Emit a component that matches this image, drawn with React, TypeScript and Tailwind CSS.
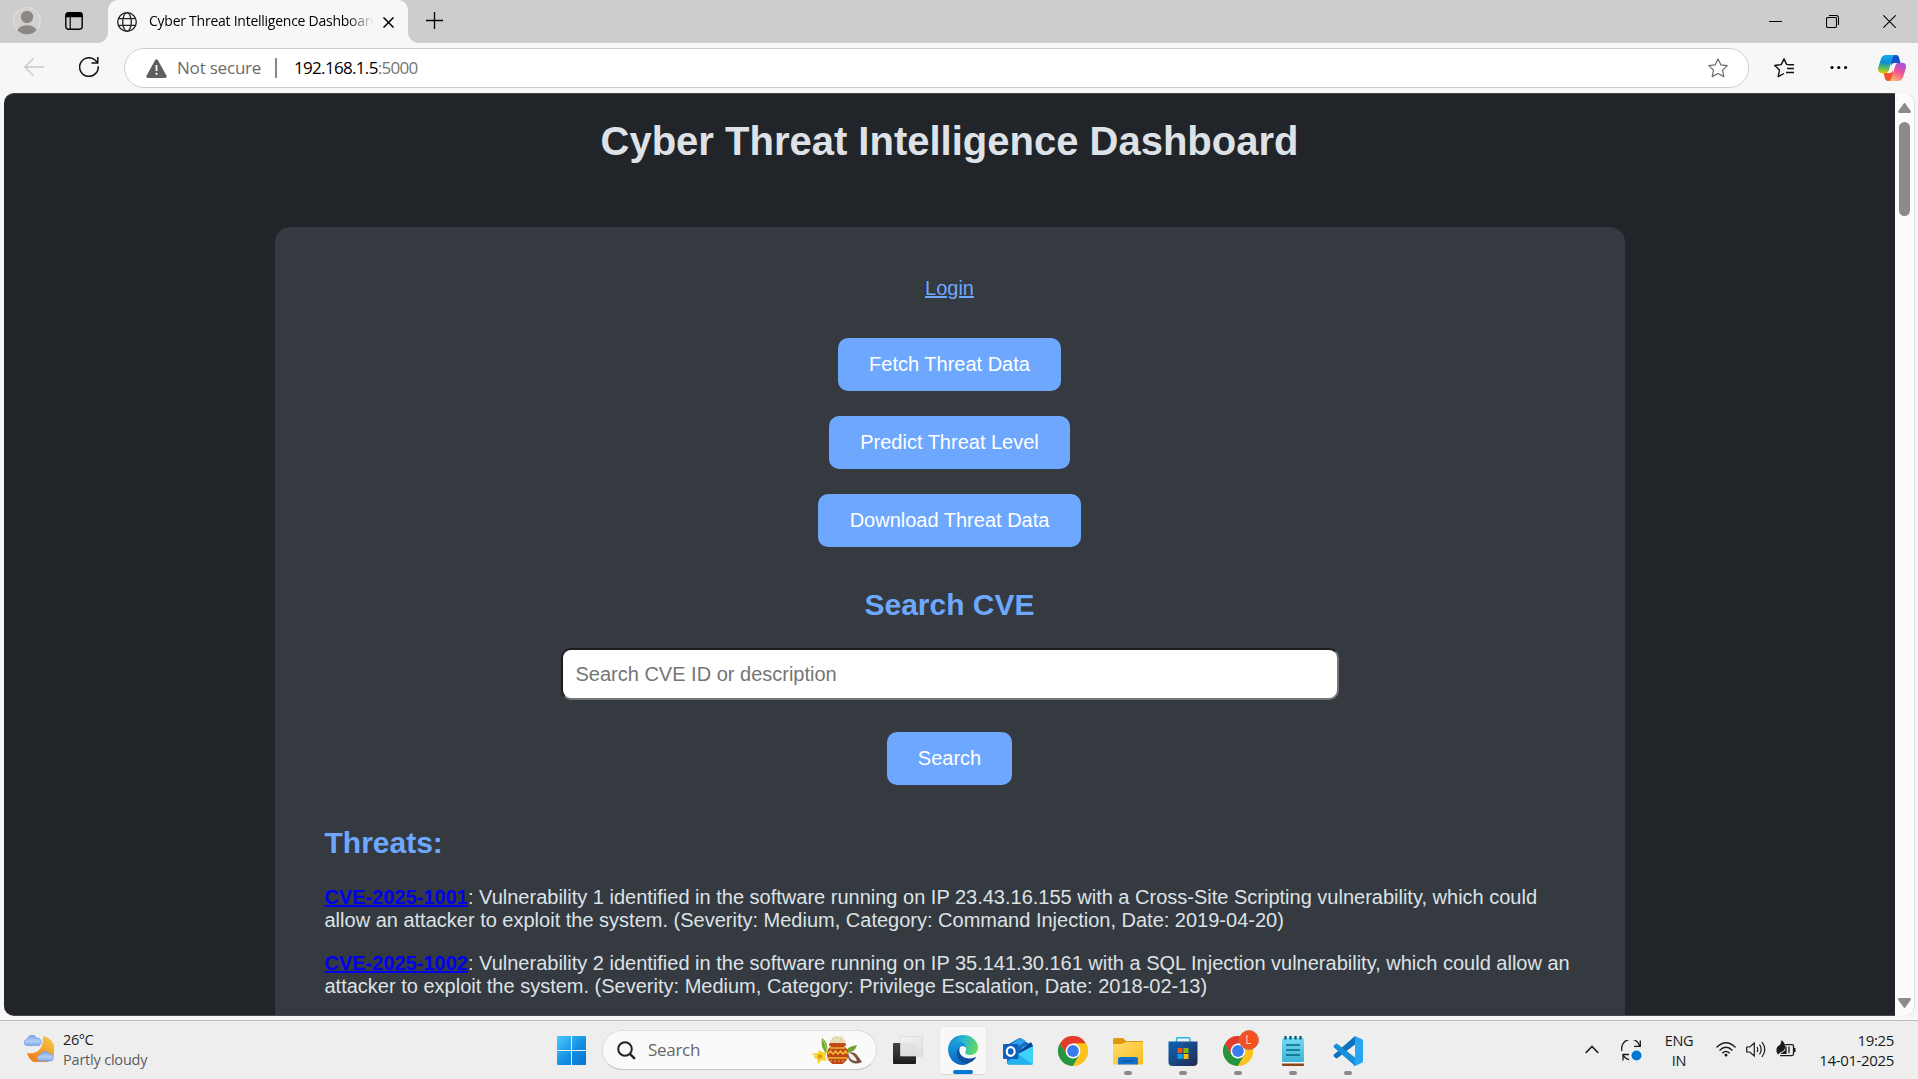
import type { ReactNode } from "react";

const threats = [
  {
    id: "CVE-2025-1001",
    text: "Vulnerability 1 identified in the software running on IP 23.43.16.155 with a Cross-Site Scripting vulnerability, which could allow an attacker to exploit the system. (Severity: Medium, Category: Command Injection, Date: 2019-04-20)",
  },
  {
    id: "CVE-2025-1002",
    text: "Vulnerability 2 identified in the software running on IP 35.141.30.161 with a SQL Injection vulnerability, which could allow an attacker to exploit the system. (Severity: Medium, Category: Privilege Escalation, Date: 2018-02-13)",
  },
];

function TabStrip() {
  return (
    <div className="flex h-[43px] shrink-0 bg-[#cdcdcd]">
      <svg className="mt-[7px] ml-[13px] size-7 shrink-0" viewBox="0 0 28 28">
        <circle cx="14" cy="14" r="13.5" fill="#d3d1cf" stroke="#e2e0de" />
        <circle cx="14" cy="10" r="6.2" fill="#8d8885" />
        <path d="M4.3 23.2a10.5 8 0 0 1 19.4 0A13 13 0 0 1 4.3 23.2z" fill="#8d8885" />
      </svg>
      <svg className="mt-3 ml-6 size-[18px] shrink-0" viewBox="0 0 18 18" fill="none">
        <rect x="0.8" y="0.8" width="16.4" height="16.4" rx="2.6" stroke="#000" strokeWidth="1.4" />
        <path d="M.6 5.2V3A2.4 2.4 0 0 1 3 .6h12A2.4 2.4 0 0 1 17.400 3v2.200z" fill="#000" />
        <path d="M5.200 5v12" stroke="#000" strokeWidth="1.200" />
      </svg>
      <div className="ml-[15px] flex w-[320px] shrink-0">
        <span className="h-full w-[10px] bg-[radial-gradient(circle_at_0_calc(100%_-_10px),#cdcdcd_9.500px,#f7f7f7_10px)] [clip-path:inset(33px_0_0_0)]" />
        <div className="flex h-full w-[300px] rounded-t-[10px] bg-[#f7f7f7]">
          <svg className="mt-3 ml-[9px] size-5 shrink-0" viewBox="0 0 20 20" fill="none" stroke="#222" strokeWidth="1.300">
            <circle cx="10" cy="10" r="9.300" />
            <ellipse cx="10" cy="10" rx="4.300" ry="9.300" />
            <path d="M1.500 6.700h17M1.500 13.300h17" />
          </svg>
          <div className="ml-3 h-[40px] w-[225px] overflow-hidden whitespace-nowrap bg-[linear-gradient(90deg,#000_88%,transparent_100%)] bg-clip-text font-['Open_Sans','Noto_Sans',sans-serif] text-[14px] leading-[42px] tracking-[-0.250px] text-transparent">
            Cyber Threat Intelligence Dashboard
          </div>
          <svg className="mt-[17px] ml-[9px] size-[11px] shrink-0" viewBox="0 0 11 11" stroke="#000" strokeWidth="1.500">
            <path d="M.5.5l10 10M10.500.5l-10 10" />
          </svg>
        </div>
        <span className="h-full w-[10px] bg-[radial-gradient(circle_at_100%_calc(100%_-_10px),#cdcdcd_9.500px,#f7f7f7_10px)] [clip-path:inset(33px_0_0_0)]" />
      </div>
      <svg className="mt-3 ml-2 size-[17px] shrink-0" viewBox="0 0 17 17" stroke="#000" strokeWidth="1.300">
        <path d="M8.500 0v17M0 8.500h17" />
      </svg>
      <div className="mt-[15px] mr-[22px] ml-auto flex gap-[44px]">
        <svg className="size-[13px]" viewBox="0 0 13 13" stroke="#000">
          <path d="M0 6.500h13" />
        </svg>
        <svg className="size-[13px]" viewBox="0 0 13 13" fill="none" stroke="#000" strokeWidth="1.100">
          <rect x=".5" y="2.500" width="10" height="10" rx="1.500" />
          <path d="M3 .5h7A2.500 2.500 0 0 1 12.500 3v7" />
        </svg>
        <svg className="size-[13px]" viewBox="0 0 13 13" stroke="#000" strokeWidth="1.100">
          <path d="M.3.3l12.400 12.400M12.700.3L.3 12.700" />
        </svg>
      </div>
    </div>
  );
}

function Toolbar() {
  return (
    <div className="flex h-[50px] shrink-0 items-start bg-[#f7f7f7] font-['Open_Sans','Noto_Sans',sans-serif]">
      <svg className="mt-[15px] ml-6 h-[18px] w-5 shrink-0" viewBox="0 0 20 18" fill="none" stroke="#c8c8c8" strokeWidth="1.300">
        <path d="M20 9H.8M9.500.5L.8 9l8.700 8.500" />
      </svg>
      <svg className="mt-[14px] ml-[35px] size-5 shrink-0" viewBox="0 0 20 20" fill="none" stroke="#111" strokeWidth="1.500">
        <path d="M19.200 9.200A9.300 9.300 0 1 1 16 3l2.600 2.600" />
        <path d="M18.800 0v6h-6.300" />
      </svg>
      <div className="mt-[5px] ml-[25px] flex h-[40px] w-[1625px] shrink-0 items-center rounded-full border border-[#cfcfcf] bg-white pr-5 pl-[21px]">
        <svg className="h-[19px] w-[21px]" viewBox="0 0 21 19">
          <path d="M9.200.9a1.500 1.500 0 0 1 2.600 0l8.700 15.800a1.500 1.500 0 0 1-1.300 2.200H1.800a1.500 1.500 0 0 1-1.300-2.200z" fill="#5f5f5f" />
          <path d="M10.500 6v6" stroke="#fff" strokeWidth="1.800" />
          <circle cx="10.500" cy="14.800" r="1.100" fill="#fff" />
        </svg>
        <span className="ml-[10px] w-[98px] text-[17px] tracking-[-0.200px] text-[#6b6b6b]">Not secure</span>
        <span className="h-5 w-[2px] bg-[#8a8a8a]" />
        <span className="ml-[17px] text-[17px] tracking-[-0.680px] text-black">
          192.168.1.5<span className="text-[#767676]">:5000</span>
        </span>
        <svg className="ml-auto size-5" viewBox="0 0 20 20" fill="none" stroke="#6a6a6a" strokeWidth="1.200" strokeLinejoin="round">
          <path d="M10 .9l2.800 5.900 6.500.8-4.800 4.500 1.300 6.500L10 15.500l-5.800 3.100 1.300-6.500L.7 7.600l6.500-.8z" />
        </svg>
      </div>
      <svg className="mt-[15px] ml-[25px] size-5 shrink-0" viewBox="0 0 20 20" fill="none" stroke="#111" strokeWidth="1.400" strokeLinejoin="round">
        <path d="M15.500 6.800l-2.900-.4L10 .9 7.200 6.600l-6.500.9 4.800 4.600-1.300 6.500 5.800-3.100M13 10.500h7M12 14.500h8M14 6.800h6M13.500 18.500" />
      </svg>
      <svg className="mt-[22px] ml-[36px] h-[5px] w-[18px] shrink-0" viewBox="0 0 18 5">
        <circle cx="2" cy="2.500" r="1.600" />
        <circle cx="8.800" cy="2.500" r="1.600" />
        <circle cx="15.600" cy="2.500" r="1.600" />
      </svg>
      <svg className="mt-3 ml-[30px] h-[26px] w-7 shrink-0" viewBox="0 0 28 26">
        <defs>
          <linearGradient id="cpA" x1=".3" y1="0" x2=".2" y2="1">
            <stop offset="0" stopColor="#1aa5ee" /><stop offset=".4" stopColor="#0b8fd4" /><stop offset=".72" stopColor="#5fbf56" /><stop offset="1" stopColor="#f0cc00" />
          </linearGradient>
          <linearGradient id="cpB" x1=".8" y1="0" x2=".4" y2="1">
            <stop offset="0" stopColor="#9a55f0" /><stop offset=".5" stopColor="#ee5096" /><stop offset="1" stopColor="#ffb070" />
          </linearGradient>
        </defs>
        <path d="M13 0h5c2 0 2.800 1.500 3.300 3.500L22.500 8H17c-2 0-3 .5-3.800 3z" fill="#1353cc" />
        <path d="M15 26h-5c-2 0-2.800-1.500-3.300-3.500L5.500 18H11c2 0 3-.5 3.800-3z" fill="#f2542d" />
        <path d="M8 0h9.500c-1.500 0-2.400 1.300-3 3l-3.700 12c-.7 2.200-1.800 3.200-4 3.200H4c-3.500 0-4.700-2.500-3.700-6L3 3.800C3.700 1.500 5.500 0 8 0z" fill="url(#cpA)" />
        <path d="M20 26h-9.500c1.500 0 2.400-1.300 3-3l3.700-12c.7-2.200 1.800-3.200 4-3.200H24c3.500 0 4.700 2.500 3.700 6L25 22.200C24.300 24.500 22.500 26 20 26z" fill="url(#cpB)" />
      </svg>
    </div>
  );
}

function ActionButton({ children, className }: { children: ReactNode; className: string }) {
  return (
    <button className={`h-[53px] rounded-[10px] bg-[#6ea8fe] pb-px text-center text-[20px] text-white ${className}`}>{children}</button>
  );
}

function Page() {
  return (
    <main className="flex w-[1891px] flex-col items-center overflow-hidden rounded-l-[10px] border-y border-[#44484b] bg-[#212529] font-['Liberation_Sans',Arial,sans-serif] text-[20px] leading-[23px] text-[#dee2e6]">
      <h1 className="mt-6 text-[40px] leading-[46px] font-bold">Cyber Threat Intelligence Dashboard</h1>
      <section className="mt-[63px] flex h-[900px] w-[1350px] shrink-0 flex-col items-center rounded-t-[15px] bg-[#343a40] px-[50px] pt-[50px]">
        <a className="text-[#6ea8fe] underline">Login</a>
        <div className="mt-[38px] flex flex-col items-center gap-[25px]">
          <ActionButton className="w-[223px]">Fetch Threat Data</ActionButton>
          <ActionButton className="w-[241px]">Predict Threat Level</ActionButton>
          <ActionButton className="w-[263px]">Download Threat Data</ActionButton>
        </div>
        <h2 className="mt-[41px] text-[30px] leading-[34px] font-bold text-[#6ea8fe]">Search CVE</h2>
        <input
          className="mt-[26px] h-[52px] w-[778px] rounded-[10px] border-2 border-t-[#1c1c1e] border-r-[#767676] border-b-[#767676] border-l-[#1c1c1e] bg-white px-[13px] text-[20px] placeholder:text-[#757575]"
          placeholder="Search CVE ID or description"
        />
        <ActionButton className="mt-8 w-[125px] shrink-0">Search</ActionButton>
        <h2 className="mt-[41px] w-full text-[30px] leading-[34px] font-bold text-[#6ea8fe]">Threats:</h2>
        <ul className="mt-[26px] flex w-full flex-col gap-5">
          {threats.map((t) => (
            <li key={t.id}>
              <a className="font-bold text-[#0000ee] underline">{t.id}</a>: {t.text}
            </li>
          ))}
        </ul>
      </section>
    </main>
  );
}

function Scrollbar() {
  return (
    <div className="flex w-[19px] flex-col items-center rounded-r-[10px] bg-[#fcfcfc] pt-[10px] pb-2 shadow-[1px_0_1px_#e2e2e2]">
      <svg className="h-[10px] w-[13px]" viewBox="0 0 13 10">
        <path d="M5.500.7a1.300 1.300 0 0 1 2 0L12.700 8q.6 2-1 2H1.300q-1.600 0-1-2z" fill="#8b8b8b" />
      </svg>
      <span className="mt-[9px] h-[94px] w-[11px] rounded-full bg-[#8b8b8b]" />
      <svg className="mt-auto h-[10px] w-[13px] rotate-180" viewBox="0 0 13 10">
        <path d="M5.500.7a1.300 1.300 0 0 1 2 0L12.700 8q.6 2-1 2H1.300q-1.600 0-1-2z" fill="#8b8b8b" />
      </svg>
    </div>
  );
}

function Slot({ children, running }: { children: ReactNode; running?: boolean }) {
  return (
    <div className="flex w-[55px] flex-col items-center pt-[15px]">
      {children}
      {running && <span className="mt-[5px] h-1 w-2 rounded-full bg-[#8a8a8a]" />}
    </div>
  );
}

function ChromeIcon() {
  return (
    <svg className="size-[30px] shrink-0" viewBox="0 0 30 30">
      <circle cx="15" cy="15" r="15" fill="#fcc31e" />
      <path d="M2 7.500A15 15 0 0 1 28 7.500H15L8.500 18.700z" fill="#e33b2e" />
      <path d="M2 7.500a15 15 0 0 0 13 22.500l6.500-11.200L15 22.500l-6.500-3.700z" fill="#259443" />
      <path d="M15 7.500h13A15 15 0 0 1 15 30l6.500-11.300z" fill="#fcc31e" />
      <circle cx="15" cy="15" r="7.400" fill="#fff" />
      <circle cx="15" cy="15" r="5.900" fill="#3a7cec" />
    </svg>
  );
}

function FestivePot() {
  return (
    <svg className="h-7 w-[51px]" viewBox="0 0 51 28">
      <path d="M11 2q7 5 5 15-7-4-5-15zM46 9q-2 8-12 8 2-7 12-8z" fill="#6fa52e" />
      <path d="M12 4q3 6 4 12" stroke="#b9d36a" fill="none" />
      <path d="M0 18l7-1 1-3 3 2 5 0-2 5 2 4-5-1-4 4-1-5-4-2 3-1z" fill="#f6d22c" />
      <circle cx="9" cy="20.500" r="2.300" fill="#e79b15" />
      <path d="M19 8q-2-4 2-5 1-4 6-3 5-1 6 3 3 2 1 5z" fill="#eadfbc" />
      <path d="M21 3h1M25 2h1M29 4h1M23 6h1M31 6h1" stroke="#bda77a" />
      <rect x="18" y="7" width="17" height="3" rx="1.500" fill="#c14b17" />
      <path d="M20 10h13q5 4 4.500 9-1 6-6 9h-10q-5-3-5.500-9 0-6 4-9z" fill="#bd4717" />
      <path d="M19 12h15M17 22h19" stroke="#f4b536" strokeWidth="1.500" />
      <path d="M17 18l2.500-3 2.500 3 2.500-3 2.500 3 2.500-3 2.500 3 2.500-3 2 3" stroke="#f4b536" strokeWidth="1.500" fill="none" />
      <path d="M19 25h14" stroke="#f4b536" strokeDasharray="2 2" />
      <path d="M36 18q6-4 10 1l5 7q-8 4-13-2z" fill="#7b5142" />
      <path d="M37 17q6 0 9 8-7 1-9-8z" fill="#f3ece7" />
    </svg>
  );
}

function Taskbar() {
  return (
    <footer className="flex h-[59px] shrink-0 border-t border-[#bdbdbd] bg-[#eeeeee] font-['Open_Sans','Noto_Sans',sans-serif]">
      <svg className="mt-[13px] ml-6 h-7 w-[30px] shrink-0" viewBox="0 0 30 28">
        <defs>
          <linearGradient id="moon" x1="1" y1="0" x2=".3" y2="1">
            <stop offset="0" stopColor="#f6cd45" /><stop offset="1" stopColor="#ef7d1a" />
          </linearGradient>
          <linearGradient id="cloud" x1="0" y1="0" x2="0" y2="1">
            <stop offset="0" stopColor="#7fa5e6" /><stop offset=".6" stopColor="#b3cff7" /><stop offset="1" stopColor="#7ea6ee" />
          </linearGradient>
        </defs>
        <path d="M19 2a14 14 0 1 1-16 17q17 2 16-17z" fill="url(#moon)" />
        <path id="cl" d="M3 11.500a3 3 0 0 1 .3-6 5 5 0 0 1 9.500-1.300 3.800 3.800 0 0 1 2 7.300z" fill="url(#cloud)" stroke="#7299dc" strokeWidth=".7" />
        <path d="M16 27a3 3 0 0 1 .3-6 5 5 0 0 1 9-1.300 3.800 3.800 0 0 1 1.700 7.300z" fill="url(#cloud)" stroke="#7299dc" strokeWidth=".7" />
      </svg>
      <div className="mt-[9px] ml-[9px] w-[494px] text-[14.500px] leading-5 tracking-[-0.400px] text-[#1c1c1c]">
        <div>26°C</div>
        <div className="tracking-[-0.200px] text-[#5c5c5c]">Partly cloudy</div>
      </div>
      <svg className="mt-[15px] size-[29px] shrink-0" viewBox="0 0 29 29">
        <defs>
          <linearGradient id="win" x1="0" y1="0" x2="1" y2="1">
            <stop offset="0" stopColor="#4cc9fb" /><stop offset=".55" stopColor="#1390e2" /><stop offset="1" stopColor="#0870cf" />
          </linearGradient>
        </defs>
        <path d="M1 0h13v14H0V1a1 1 0 0 1 1-1zM15 0h13a1 1 0 0 1 1 1v13H15zM0 15h14v14H1a1 1 0 0 1-1-1zM15 15h14v13a1 1 0 0 1-1 1H15z" fill="url(#win)" />
      </svg>
      <div className="mt-[9px] ml-4 flex h-[40px] w-[275px] shrink-0 items-center rounded-full border border-[#dedede] border-b-[#c4c4c4] bg-[#fafafa] pr-[14px] pl-[14px]">
        <svg className="size-[19px]" viewBox="0 0 19 19" fill="none" stroke="#222" strokeWidth="2">
          <circle cx="8" cy="8" r="6.800" />
          <path d="M12.900 12.900l5 5" strokeWidth="2.400" />
        </svg>
        <span className="ml-3 text-[17px] tracking-[-0.300px] text-[#666]">Search</span>
        <span className="ml-auto">
          <FestivePot />
        </span>
      </div>
      <svg className="mt-[15px] ml-4 h-7 w-[30px] shrink-0" viewBox="0 0 30 28">
        <defs>
          <linearGradient id="tv" x1="0" y1="0" x2="0" y2="1">
            <stop offset="0" stopColor="#454543" /><stop offset="1" stopColor="#1b1b1b" />
          </linearGradient>
          <linearGradient id="tw" x1="0" y1="0" x2="1" y2="1">
            <stop offset="0" stopColor="#fff" stopOpacity=".7" /><stop offset="1" stopColor="#dcdcdc" stopOpacity=".95" />
          </linearGradient>
        </defs>
        <rect y="7" width="23" height="21" rx="1" fill="url(#tv)" />
        <rect x="7" width="23" height="20.500" rx="1" fill="#c8c8c8" fillOpacity=".75" />
        <rect x="7.500" y=".5" width="22" height="19.500" rx="1" fill="url(#tw)" />
      </svg>
      <div className="mt-[5px] ml-4 flex h-[49px] w-12 shrink-0 flex-col items-center rounded-[5px] border border-b-[#d8d8d8] border-[#e6e6e6] bg-[#f8f8f8] pt-2">
        <svg className="size-[30px] shrink-0" viewBox="0 0 30 30">
          <defs>
            <linearGradient id="eA" x1="0" y1=".3" x2="1" y2=".5">
              <stop offset="0" stopColor="#1a86d8" /><stop offset=".5" stopColor="#2bb9cf" /><stop offset="1" stopColor="#65dd55" />
            </linearGradient>
            <linearGradient id="eB" x1=".3" y1="0" x2=".5" y2="1">
              <stop offset="0" stopColor="#189ee0" /><stop offset="1" stopColor="#0b63bd" />
            </linearGradient>
          </defs>
          <path d="M0 14C1 5 7 0 15 0c9 0 15 6.500 15 12.500 0 5-4 7.500-8 7.500-3.500 0-5-1.500-5-2.500s1-1.300 1-3.500c0-3-3-6-8-6-5.500 0-9 3-10 6z" fill="url(#eA)" />
          <path d="M0 14c.5-4 4.500-7.500 10-7.500 4 0 7.500 2 8 6-4-3-8 0-8 4.500 0 6 5 11 11 11q-2.500 2-6 2C6 30 0 23 0 14z" fill="url(#eB)" />
          <path d="M11.500 12.500c-2 1.500-3 4-2.500 7 1 6 6.500 10 12 8.500 3-.9 5.500-3 6.800-5.200.3-.6-.2-.9-.7-.6-7.500 3.300-16.500.3-15.600-9.700z" fill="#104f9c" />
          <path d="M17.800 13.500q-1-2-3-2-3.500 1-3.300 5c.5 5.500 9 7.500 14 5-4 0-8.500-1-8.500-4 0-1 1-1.500.8-4z" fill="#f8f8f8" />
        </svg>
        <span className="mt-[5px] h-1 w-5 shrink-0 rounded-full bg-[#0078d4]" />
      </div>
      <div className="ml-[3px] flex">
        <Slot>
          <svg className="size-[30px]" viewBox="0 0 30 30">
            <path d="M4 9L16.500 2 30 10v17a1.500 1.500 0 0 1-1.500 1.500H6A2 2 0 0 1 4 26z" fill="#1669bd" />
            <path d="M9 7l9-5 5 3-12 9zM19 11l9-4 2 3-13 9z" fill="#2f9df0" />
            <path d="M17 15l11-9 2 4-13 9z" fill="#0a3f91" />
            <path d="M15 18l15-8v17a1.500 1.500 0 0 1-1.500 1.500H6L4 26z" fill="#3ed3f6" />
            <path d="M15 18l14 10q-1 .5-2 .5H6L4 26z" fill="#23b2ec" />
            <rect y="8" width="15.500" height="15" rx="1" fill="#0f5fbd" />
            <ellipse cx="7.700" cy="15.500" rx="3.900" ry="4.300" fill="none" stroke="#fff" strokeWidth="2.200" />
          </svg>
        </Slot>
        <Slot>
          <ChromeIcon />
        </Slot>
        <Slot running>
          <svg className="size-[30px]" viewBox="0 0 30 30">
            <defs>
              <linearGradient id="fold" x1="0" y1="0" x2="1" y2="1">
                <stop offset="0" stopColor="#ffdc6c" /><stop offset="1" stopColor="#f9bc20" />
              </linearGradient>
            </defs>
            <path d="M0 3.500A1.500 1.500 0 0 1 1.500 2H10l3 3h16a1 1 0 0 1 1 1v5H0z" fill="#dd9b0b" />
            <path d="M0 8h9l4-2h17v21.500a1 1 0 0 1-1 1H1a1 1 0 0 1-1-1z" fill="url(#fold)" />
            <path d="M5 28.500V23a2 2 0 0 1 2-2h16a2 2 0 0 1 2 2v5.500z" fill="#1272c9" />
            <path d="M9 25h12" stroke="#0b4f9c" strokeWidth="1.300" />
          </svg>
        </Slot>
        <Slot running>
          <svg className="size-[30px]" viewBox="0 0 30 30">
            <defs>
              <linearGradient id="store" x1="0" y1="0" x2="1" y2="1">
                <stop offset="0" stopColor="#0b66b8" /><stop offset="1" stopColor="#25284f" />
              </linearGradient>
            </defs>
            <path d="M8.500 6V3A1.500 1.500 0 0 1 10 1.700h10.500A1.500 1.500 0 0 1 22 3v3" fill="none" stroke="#24b7ee" strokeWidth="1.500" />
            <path d="M.5 5.500h29V26a4 4 0 0 1-4 4h-21a4 4 0 0 1-4-4z" fill="url(#store)" />
            <path d="M9.500 12h5v5h-5z" fill="#f25022" />
            <path d="M15.500 12h5v5h-5z" fill="#7fba00" />
            <path d="M9.500 18h5v5h-5z" fill="#00a4ef" />
            <path d="M15.500 18h5v5h-5z" fill="#ffb900" />
          </svg>
        </Slot>
        <Slot running>
          <div className="relative h-[30px]">
            <ChromeIcon />
            <span className="absolute -top-[6px] left-4 flex size-5 items-center justify-center rounded-full border border-[#c8705c] bg-[#f4511e] text-[12px] leading-none text-[#fbd0c2]">
              L
            </span>
          </div>
        </Slot>
        <Slot running>
          <svg className="size-[30px]" viewBox="0 0 30 30">
            <defs>
              <linearGradient id="note" x1="0" y1="0" x2="0" y2="1">
                <stop offset="0" stopColor="#74dcf0" /><stop offset="1" stopColor="#3cb4d6" />
              </linearGradient>
            </defs>
            <rect x="4" y="26" width="22" height="4" rx="1" fill="#8a4614" />
            <path d="M4 25h22v2.500H4z" fill="#f4f4f4" />
            <rect x="4" y="2" width="22" height="24" rx="1.500" fill="url(#note)" />
            <path d="M7.500 0v3.500M12.500 0v3.500M17.500 0v3.500M22.500 0v3.500" stroke="#0c5f7c" strokeWidth="2.400" />
            <path d="M8 9h14M8 14h14M8 19h14" stroke="#0c6683" strokeWidth="1.700" />
          </svg>
        </Slot>
        <Slot running>
          <svg className="size-[30px]" viewBox="0 0 30 30">
            <path d="M22 0L1 18.500q-1 1 0 2l1.700 1.600q.8.600 1.800 0L22 8.500z" fill="#0d72bd" />
            <path d="M22 30L1 11.500q-1-1 0-2l1.700-1.600q.8-.6 1.800 0L22 21.500z" fill="#1491d9" />
            <path d="M22 0l7 3.200q1 .5 1 1.600v20.400q0 1.100-1 1.600L22 30q-1 0-1.700-.8l1.700-.7z" fill="#29a6f3" />
          </svg>
        </Slot>
      </div>
      <svg className="mt-[24px] ml-[210px] h-[9px] w-[14px] shrink-0" viewBox="0 0 14 9" fill="none" stroke="#222" strokeWidth="1.700">
        <path d="M.7 8L7 1.500 13.300 8" />
      </svg>
      <svg className="mt-[19px] ml-[22px] size-[21px] shrink-0" viewBox="0 0 21 21" fill="none" stroke="#1b1b1b" strokeWidth="1.300">
        <path d="M1 11A9 9 0 0 1 18.800 6M19.300.5v5.800h-6.300M8 19.500Q4.500 19 2 14.800M2 20.500v-6h6" />
        <circle cx="15.500" cy="15.500" r="5" fill="#0078d4" stroke="none" />
      </svg>
      <div className="mt-[10px] ml-[17px] w-10 text-center text-[14.500px] leading-5 tracking-[-0.300px] text-[#1a1a1a]">
        ENG
        <br />
        IN
      </div>
      <svg className="mt-[21px] ml-[17px] h-[15px] w-5 shrink-0" viewBox="0 0 20 15" fill="none" stroke="#1b1b1b" strokeWidth="1.300">
        <path d="M.5 5.500q9.500-9.500 19 0M3.500 8.500q6.500-6.500 13 0M6.300 11.300q3.700-3.800 7.400 0" />
        <circle cx="10" cy="13" r="1.500" fill="#1b1b1b" stroke="none" />
      </svg>
      <svg className="mt-[20px] ml-[10px] h-[17px] w-5 shrink-0" viewBox="0 0 20 17" fill="none" stroke="#1b1b1b" strokeWidth="1.200">
        <path d="M.7 6h3L8.300 2v13L3.700 11h-3zM11 6q1.500 2.500 0 5M13.500 3.500q3.300 5 0 10M16 1q5.500 7.500 0 15" />
      </svg>
      <svg className="mt-[19px] ml-[10px] h-[18px] w-5 shrink-0" viewBox="0 0 20 18" fill="none" stroke="#1b1b1b" strokeWidth="1.300">
        <path d="M9 4.600h7q1.500 0 1.500 1.500v8q0 1.500-1.500 1.500H4" />
        <path d="M18.500 8v4" strokeWidth="2" />
        <path d="M5.800 0q4.500 4 3.200 8.500-1 3-4 3.500L2 14.500 1 13q-2-6 3-8zM10 7v6H6l3.500-3" fill="#1b1b1b" stroke="none" />
        <path d="M10 6.500v6.800H5M13 6.500v6.800" />
      </svg>
      <div className="mt-[9px] mr-6 ml-auto shrink-0 text-right text-[15px] leading-5 tracking-[-0.350px] text-[#1a1a1a]">
        19:25
        <br />
        14-01-2025
      </div>
    </footer>
  );
}

export default function App() {
  return (
    <div className="flex h-[1079px] w-[1918px] flex-col overflow-hidden bg-[#f7f7f7]">
      <TabStrip />
      <Toolbar />
      <div className="flex h-[923px] shrink-0 pl-1">
        <Page />
        <Scrollbar />
      </div>
      <div className="h-1 shrink-0" />
      <Taskbar />
    </div>
  );
}
